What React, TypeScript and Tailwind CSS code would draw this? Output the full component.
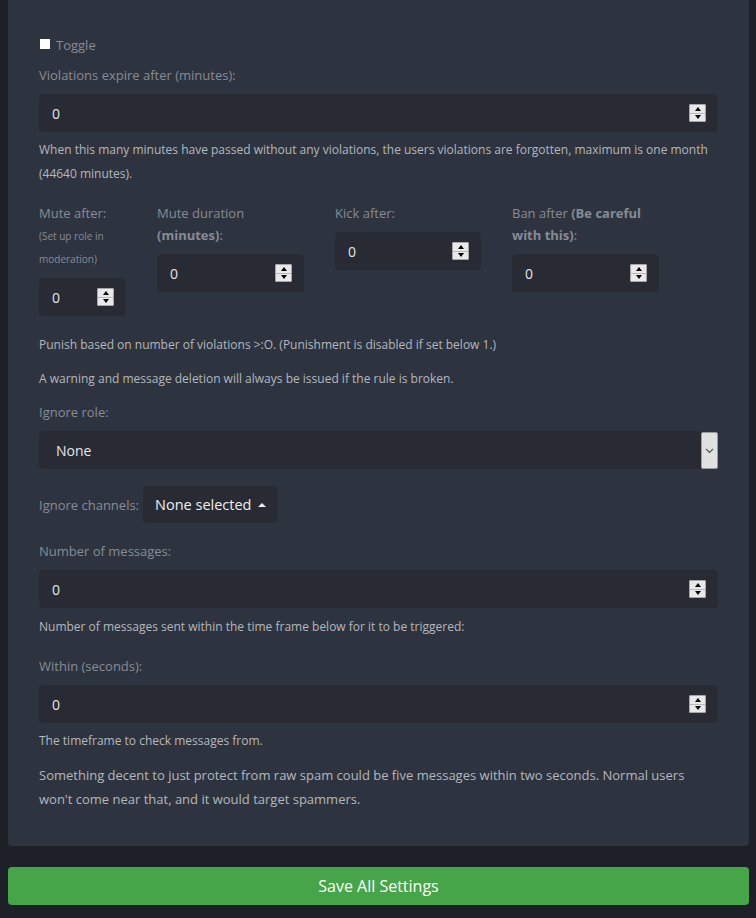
import React from 'react';

function Spinner() {
  return (
    <div className="flex flex-col w-[17px] h-[18px] border border-[#a6a6a6] bg-[#e9e9e9] rounded-[1px] shrink-0">
      <div className="flex-1 flex items-center justify-center border-b border-[#b8b8b8]">
        <div className="w-0 h-0 border-l-[3.5px] border-r-[3.5px] border-b-[4px] border-l-transparent border-r-transparent border-b-black" />
      </div>
      <div className="flex-1 flex items-center justify-center">
        <div className="w-0 h-0 border-l-[3.5px] border-r-[3.5px] border-t-[4px] border-l-transparent border-r-transparent border-t-black" />
      </div>
    </div>
  );
}

function NumberBox({ className = '' }: { className?: string }) {
  return (
    <div className={`h-[38px] bg-[#282b33] rounded-[4px] flex items-center justify-between pl-[13px] pr-[12px] ${className}`}>
      <span className="text-[14px] text-[#e4e5e7]">0</span>
      <Spinner />
    </div>
  );
}

const label = 'text-[13px] leading-[20px] text-[#868b95]';
const help = 'text-[12px] leading-[24px] text-[#b4b7bd]';

export default function App() {
  return (
    <div className="min-h-screen bg-[#1e2028] pl-2 pr-[7px] pb-[13px] font-['Open_Sans',sans-serif]">
      <div className="bg-[#2e343f] rounded-b-[4px] px-[31px] pt-[35px] pb-[35px]">
        {/* Toggle */}
        <div className="flex items-center gap-[6px] h-[20px]">
          <div className="w-[10px] h-[10px] bg-white ml-[1px] -mt-[3px]" />
          <span className={label}>Toggle</span>
        </div>

        <div className={`${label} mt-[10px]`}>Violations expire after (minutes):</div>
        <NumberBox className="mt-[9px]" />
        <p className={`${help} mt-[6px]`}>
          When this many minutes have passed without any violations, the users violations are forgotten, maximum is one month (44640 minutes).
        </p>

        {/* Punishments */}
        <div className="flex items-start gap-[31px] mt-[16px]">
          <div className="w-[87px]">
            <div className="text-[13px] leading-[22px] text-[#868b95]">Mute after:</div>
            <div className="text-[10px] leading-[23px] text-[#868b95] pt-px">(Set up role in moderation)</div>
            <NumberBox className="mt-[7px]" />
          </div>
          <div className="w-[147px]">
            <div className="text-[13px] leading-[22px] text-[#868b95]">
              Mute duration <b>(minutes)</b>:
            </div>
            <NumberBox className="mt-[8px]" />
          </div>
          <div className="w-[146px]">
            <div className="text-[13px] leading-[22px] text-[#868b95]">Kick after:</div>
            <NumberBox className="mt-[8px]" />
          </div>
          <div className="w-[147px]">
            <div className="text-[13px] leading-[22px] text-[#868b95]">
              Ban after <b>(Be careful with this)</b>:
            </div>
            <NumberBox className="mt-[8px]" />
          </div>
        </div>

        <p className="text-[12px] leading-[20px] text-[#b4b7bd] mt-[19px]">
          Punish based on number of violations &gt;:O. (Punishment is disabled if set below 1.)
        </p>
        <p className="text-[12px] leading-[20px] text-[#b4b7bd] mt-[14px]">
          A warning and message deletion will always be issued if the rule is broken.
        </p>

        <div className={`${label} mt-[13px]`}>Ignore role:</div>
        <div className="flex h-[38px] mt-[9px]">
          <div className="flex-1 bg-[#282b33] rounded-l-[4px] flex items-center pl-[17px] text-[14px] text-[#e4e5e7]">
            None
          </div>
          <div className="w-[17px] mt-px h-[37px] bg-[#e1e1e1] border border-[#9c9c9c] rounded-[2px] flex items-center justify-center">
            <svg width="9" height="6" viewBox="0 0 9 6" fill="none">
              <path d="M1 1l3.5 3.5L8 1" stroke="#555" strokeWidth="1.2" />
            </svg>
          </div>
        </div>

        <div className="flex items-center gap-[4px] mt-[17px]">
          <span className={label}>Ignore channels:</span>
          <div className="h-[37px] bg-[#282b33] rounded-[4px] flex items-center pl-[12px] pr-[12px] gap-[7px]">
            <span className="text-[14.5px] text-[#eceef0]">None selected</span>
            <div className="w-0 h-0 border-l-[4px] border-r-[4px] border-b-[4px] border-l-transparent border-r-transparent border-b-[#eceef0]" />
          </div>
        </div>

        <div className={`${label} mt-[18px]`}>Number of messages:</div>
        <NumberBox className="mt-[9px]" />
        <p className={`${help} mt-[7px]`}>Number of messages sent within the time frame below for it to be triggered:</p>

        <div className={`${label} mt-[17px]`}>Within (seconds):</div>
        <NumberBox className="mt-[9px]" />
        <p className={`${help} mt-[6px]`}>The timeframe to check messages from.</p>

        <p className="text-[13px] leading-[24px] text-[#b4b7bd] mt-[10px]">
          Something decent to just protect from raw spam could be five messages within two seconds. Normal users won't come near that, and it would target spammers.
        </p>
      </div>

      <button className="mt-[21px] w-full h-[38px] bg-[#46a548] rounded-[4px] text-[16px] text-white">
        Save All Settings
      </button>
    </div>
  );
}
